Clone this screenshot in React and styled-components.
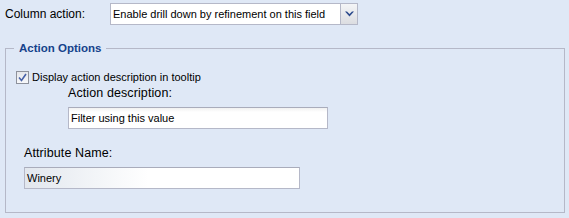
import React from 'react';
import styled, { createGlobalStyle } from 'styled-components';

const Global = createGlobalStyle`
  html, body {
    margin: 0;
    padding: 0;
    background: #dfe8f6;
    font-family: "Liberation Sans", Arial, sans-serif;
    color: #000;
  }
`;

const Page = styled.div`
  width: 569px;
  height: 218px;
  box-sizing: border-box;
  padding: 3px 4px 0 5px;
`;

const Row = styled.div`
  display: flex;
  align-items: center;
  height: 22px;
`;

const RowLabel = styled.label`
  width: 105px;
  font-size: 12px;
  line-height: 16px;
  margin-top: -1px;
`;

const Select = styled.div`
  display: flex;
  width: 248px;
  height: 22px;
  box-sizing: border-box;
`;

const SelectText = styled.div`
  flex: 1;
  background: #fff;
  border: 1px solid #b5b8c8;
  border-right: none;
  font-size: 11px;
  line-height: 20px;
  padding-left: 2px;
  white-space: nowrap;
  overflow: hidden;
`;

const Trigger = styled.div`
  width: 16px;
  border: 1px solid #b5b8c8;
  background: linear-gradient(#f4f5f7, #dcdde1);
  display: flex;
  align-items: center;
  justify-content: center;
`;

const Fieldset = styled.fieldset`
  margin: 16px 0 0 0;
  padding: 15px 0 23px 0;
  border: 1px solid #b5b8c8;
  min-width: 0;
`;

const Legend = styled.legend`
  margin-left: 8px;
  padding: 0 5px;
  color: #15428b;
  font-weight: bold;
  font-size: 11.5px;
  line-height: 14px;
`;

const CheckRow = styled.label`
  display: flex;
  align-items: center;
  gap: 3px;
  margin-left: 10px;
  height: 14px;
  font-size: 11px;
`;

const Box = styled.span`
  width: 11px;
  height: 11px;
  border: 1px solid #8e929c;
  background: linear-gradient(#e4e6eb, #f7f8fa);
  display: flex;
  align-items: center;
  justify-content: center;
`;

const Field = styled.div`
  display: flex;
  flex-direction: column;
  gap: 6px;
  margin-left: ${p => p.$indent}px;
  margin-top: ${p => p.$top}px;
`;

const FieldLabel = styled.div`
  font-size: 12.5px;
  line-height: 16px;
  letter-spacing: 0.1px;
`;

const Input = styled.div`
  width: ${p => p.$width}px;
  height: 22px;
  box-sizing: border-box;
  border: 1px solid #b5b8c8;
  border-top-color: #a9acbb;
  background: ${p => p.$shade
    ? 'linear-gradient(90deg, #e2e7ee, #fff 45%)'
    : 'linear-gradient(#f1f1f1, #fff 4px)'};
  font-size: 11px;
  line-height: 20px;
  padding-left: 2px;
`;

export default function App() {
  return (
    <Page>
      <Global />
      <Row>
        <RowLabel>Column action:</RowLabel>
        <Select>
          <SelectText>Enable drill down by refinement on this field</SelectText>
          <Trigger>
            <svg width="9" height="6" viewBox="0 0 9 6">
              <path d="M0 0.5 L2 0.5 L4.5 3 L7 0.5 L9 0.5 L4.5 5.5 Z" fill="#2c4a8c" />
            </svg>
          </Trigger>
        </Select>
      </Row>
      <Fieldset>
        <Legend>Action Options</Legend>
        <CheckRow>
          <Box>
            <svg width="9" height="9" viewBox="0 0 9 9">
              <path d="M1 4.5 L3.5 7.5 L8 1" stroke="#4661a8" strokeWidth="1.6" fill="none" />
            </svg>
          </Box>
          Display action description in tooltip
        </CheckRow>
        <Field $indent={62} $top={1}>
          <FieldLabel>Action description:</FieldLabel>
          <Input $width={260}>Filter using this value</Input>
        </Field>
        <Field $indent={18} $top={16}>
          <FieldLabel>Attribute Name:</FieldLabel>
          <Input $width={276} $shade>Winery</Input>
        </Field>
      </Fieldset>
    </Page>
  );
}
